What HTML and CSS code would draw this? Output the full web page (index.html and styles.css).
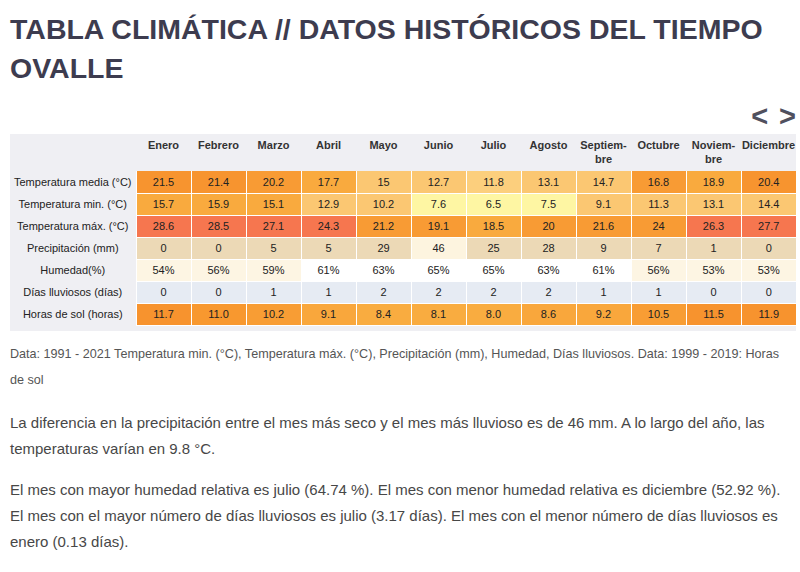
FILE: index.html
```html
<!DOCTYPE html>
<html lang="es">
<head>
<meta charset="utf-8">
<title>Tabla climática Ovalle</title>
<link rel="stylesheet" href="styles.css">
</head>
<body>
<h1 class="title">TABLA CLIMÁTICA // DATOS HISTÓRICOS DEL TIEMPO OVALLE</h1>
<div class="nav"><span class="arrow">&lt;</span><span class="arrow">&gt;</span></div>
<div class="table-wrap">
<table class="climate">
<thead>
<tr>
<th class="corner"></th>
<th>Enero</th><th>Febrero</th><th>Marzo</th><th>Abril</th><th>Mayo</th><th>Junio</th><th>Julio</th><th>Agosto</th><th>Septiem-<br>bre</th><th>Octubre</th><th>Noviem-<br>bre</th><th>Diciembre</th>
</tr>
</thead>
<tbody>
<tr>
<td class="label">Temperatura media (°C)</td>
<td class="v t2">21.5</td><td class="v t2">21.4</td><td class="v t3">20.2</td><td class="v t4">17.7</td><td class="v t5">15</td><td class="v t5">12.7</td><td class="v t6">11.8</td><td class="v t5">13.1</td><td class="v t5">14.7</td><td class="v t3">16.8</td><td class="v t4">18.9</td><td class="v t2">20.4</td>
</tr>
<tr>
<td class="label">Temperatura min. (°C)</td>
<td class="v t4">15.7</td><td class="v t4">15.9</td><td class="v t4">15.1</td><td class="v t5">12.9</td><td class="v t5">10.2</td><td class="v t7">7.6</td><td class="v t7">6.5</td><td class="v t7">7.5</td><td class="v t5">9.1</td><td class="v t5">11.3</td><td class="v t5">13.1</td><td class="v t5">14.4</td>
</tr>
<tr>
<td class="label">Temperatura máx. (°C)</td>
<td class="v t1">28.6</td><td class="v t1">28.5</td><td class="v t1">27.1</td><td class="v t1">24.3</td><td class="v t3">21.2</td><td class="v t3">19.1</td><td class="v t4">18.5</td><td class="v t3">20</td><td class="v t3">21.6</td><td class="v t3">24</td><td class="v t1">26.3</td><td class="v t1">27.7</td>
</tr>
<tr>
<td class="label">Precipitación (mm)</td>
<td class="v p1">0</td><td class="v p1">0</td><td class="v p1">5</td><td class="v p1">5</td><td class="v p1">29</td><td class="v p2">46</td><td class="v p1">25</td><td class="v p1">28</td><td class="v p1">9</td><td class="v p1">7</td><td class="v p1">1</td><td class="v p1">0</td>
</tr>
<tr>
<td class="label">Humedad(%)</td>
<td class="v h1">54%</td><td class="v h1">56%</td><td class="v h1">59%</td><td class="v h2">61%</td><td class="v h2">63%</td><td class="v h2">65%</td><td class="v h2">65%</td><td class="v h2">63%</td><td class="v h2">61%</td><td class="v h1">56%</td><td class="v h1">53%</td><td class="v h1">53%</td>
</tr>
<tr>
<td class="label">Días lluviosos (días)</td>
<td class="v d">0</td><td class="v d">0</td><td class="v d">1</td><td class="v d">1</td><td class="v d">2</td><td class="v d">2</td><td class="v d">2</td><td class="v d">2</td><td class="v d">1</td><td class="v d">1</td><td class="v d">0</td><td class="v d">0</td>
</tr>
<tr>
<td class="label">Horas de sol (horas)</td>
<td class="v s1">11.7</td><td class="v s2">11.0</td><td class="v s3">10.2</td><td class="v s4">9.1</td><td class="v s5">8.4</td><td class="v s5">8.1</td><td class="v s5">8.0</td><td class="v s4">8.6</td><td class="v s4">9.2</td><td class="v s3">10.5</td><td class="v s1">11.5</td><td class="v s1">11.9</td>
</tr>
</tbody>
</table>
</div>
<p class="source">Data: 1991 - 2021 Temperatura min. (°C), Temperatura máx. (°C), Precipitación (mm), Humedad, Días lluviosos. Data: 1999 - 2019: Horas de sol</p>
<p class="text first">La diferencia en la precipitación entre el mes más seco y el mes más lluvioso es de 46 mm. A lo largo del año, las temperaturas varían en 9.8 °C.</p>
<p class="text">El mes con mayor humedad relativa es julio (64.74 %). El mes con menor humedad relativa es diciembre (52.92 %). El mes con el mayor número de días lluviosos es julio (3.17 días). El mes con el menor número de días lluviosos es enero (0.13 días).</p>
</body>
</html>
```

FILE: styles.css
```css
html, body {
  margin: 0;
  padding: 0;
  background: #ffffff;
}

body {
  font-family: "Liberation Sans", Arial, sans-serif;
  padding: 10px 0 0 10px;
  color: #444;
}

.title {
  margin: 0;
  font-size: 28.5px;
  line-height: 39px;
  font-weight: bold;
  color: #3d3c4f;
  width: 770px;
}

.nav {
  width: 786px;
  margin-top: 15px;
  height: 26px;
  display: flex;
  justify-content: flex-end;
  gap: 11px;
}

.arrow {
  font-size: 29px;
  line-height: 26px;
  font-weight: bold;
  color: #50505e;
}

.table-wrap {
  margin-top: 5px;
  width: 786px;
  background: #efeff3;
  padding-bottom: 5px;
}

.climate {
  border-collapse: collapse;
  border-spacing: 0;
  table-layout: fixed;
  width: 786px;
  font-size: 11px;
  color: #222;
}

.climate th {
  width: 55px;
  height: 37px;
  padding: 4px 0 0;
  box-sizing: border-box;
  vertical-align: top;
  font-weight: bold;
  line-height: 14px;
  color: #333;
  text-align: center;
}

.climate th.corner {
  width: 126px;
}

.climate td {
  height: 22px;
  padding: 0;
  box-sizing: border-box;
  text-align: center;
  vertical-align: middle;
  line-height: 14px;
}

.climate td.label {
  color: #222;
}

.climate td.v {
  border-left: 1px solid #ffffff;
  border-bottom: 1px solid #ffffff;
}

.t1 { background: #f6764f; }
.t2 { background: #f7942f; }
.t3 { background: #f89b34; }
.t4 { background: #f9aa3e; }
.t5 { background: #fbc772; }
.t6 { background: #fccf7d; }
.t7 { background: #fef6a3; }

.p1 { background: #ecd9b6; }
.p2 { background: #fdf4df; }

.h1 { background: #fdf5e3; }
.h2 { background: #ffffff; }

.d { background: #e6ebf3; }

.s1 { background: #f7932e; }
.s2 { background: #f8982f; }
.s3 { background: #f89d34; }
.s4 { background: #f9a73c; }
.s5 { background: #f9ac40; }

.source {
  margin: 10px 0 0;
  font-size: 12.6px;
  line-height: 26px;
  color: #555;
  width: 786px;
}

.text {
  margin: 15px 0 0;
  font-size: 15px;
  line-height: 26px;
  color: #474747;
  width: 780px;
}

.text.first {
  margin-top: 17px;
}
```
